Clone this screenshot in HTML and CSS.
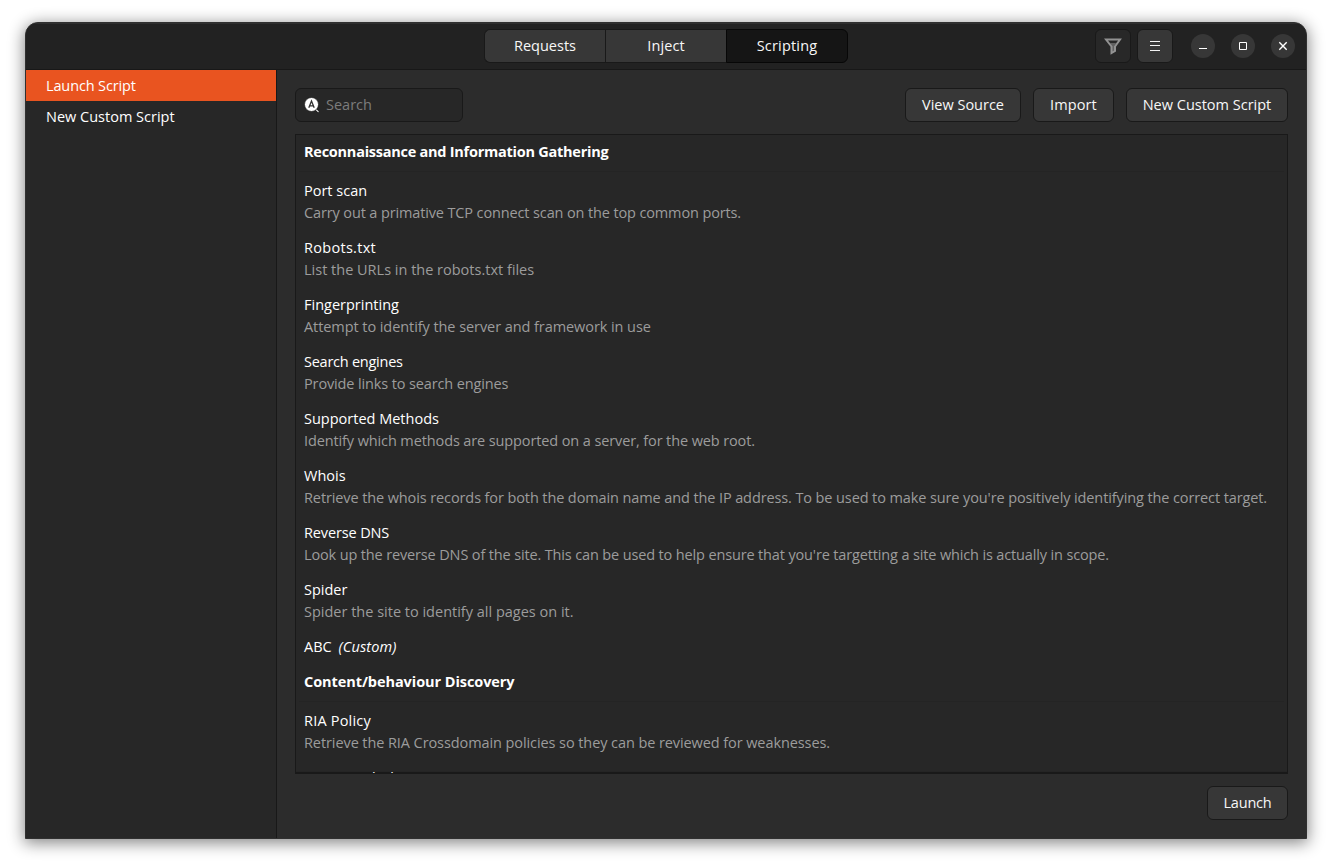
FILE: index.html
```html
<!DOCTYPE html>
<html lang="en">
<head>
<meta charset="utf-8">
<title>Scripting</title>
<link rel="stylesheet" href="styles.css">
</head>
<body>
<div class="window">
  <header class="headerbar">
    <div class="side"></div>
    <nav class="tabs">
      <button class="tab">Requests</button>
      <button class="tab wide-1">Inject</button>
      <button class="tab active wide-2">Scripting</button>
    </nav>
    <div class="side controls">
      <button class="icon-button dim" aria-label="Filter">
        <svg width="18" height="18" viewBox="0 0 18 18"><path d="M6 6h6l-1.500 3v4.500L7.500 15.500V9z" fill="#616161"/><path d="M2 2.500H16L11 9.500V14L7.500 16V9.500Z" fill="none" stroke="#929292" stroke-width="2"/></svg>
      </button>
      <button class="icon-button" aria-label="Menu">
        <svg width="16" height="16" viewBox="0 0 16 16"><path d="M3 3.500H13M3 7.500H13M3 12.500H13" stroke="#f2f2f2" stroke-width="1"/></svg>
      </button>
      <div class="window-buttons">
        <button class="round" aria-label="Minimize"><svg width="24" height="24"><path d="M8 14.500H16" stroke="#fff"/></svg></button>
        <button class="round" aria-label="Maximize"><svg width="24" height="24"><path d="M8.500 8.500H15.500V15.500H8.500Z" fill="none" stroke="#fff"/></svg></button>
        <button class="round" aria-label="Close"><svg width="24" height="24"><path d="M8.300 8.300L15.700 15.700M15.700 8.300L8.300 15.700" stroke="#fff" stroke-width="1.400"/></svg></button>
      </div>
    </div>
  </header>
  <div class="body">
    <aside class="sidebar">
      <div class="side-item selected tight-2">Launch Script</div>
      <div class="side-item">New Custom Script</div>
    </aside>
    <main class="content">
      <div class="toolbar">
        <div class="search">
          <svg width="16" height="16" viewBox="0 0 16 16"><path d="M11 11.500L14.500 15" stroke="#151515" stroke-width="3"/><path d="M11.500 12L14.500 15" stroke="#ddd" stroke-width="1.200"/><circle cx="7.500" cy="7.500" r="7" fill="#fff" stroke="#151515" stroke-width=".7"/><path d="M4.800 10.800L7.500 4L10.200 10.800M5.800 8.800H9.200" fill="none" stroke="#333" stroke-width="1.300"/></svg>
          <span>Search</span>
        </div>
        <div class="actions">
          <button class="button view">View Source</button>
          <button class="button import wide-1">Import</button>
          <button class="button new">New Custom Script</button>
        </div>
      </div>
      <section class="list">
        <h2 class="tight-3">Reconnaissance and Information Gathering</h2>
        <div class="row"><p>Port scan</p><p class="desc tight-2">Carry out a primative TCP connect scan on the top common ports.</p></div>
        <div class="row"><p class="wide-3">Robots.txt</p><p class="desc">List the URLs in the robots.txt files</p></div>
        <div class="row"><p>Fingerprinting</p><p class="desc tight-1">Attempt to identify the server and framework in use</p></div>
        <div class="row"><p class="tight-3">Search engines</p><p class="desc tight-2">Provide links to search engines</p></div>
        <div class="row"><p>Supported Methods</p><p class="desc methods">Identify which methods are supported on a server, for the web root.</p></div>
        <div class="row"><p>Whois</p><p class="desc whois">Retrieve the whois records for both the domain name and the IP address. To be used to make sure you're positively identifying the correct target.</p></div>
        <div class="row"><p class="tight-2">Reverse DNS</p><p class="desc reverse">Look up the reverse DNS of the site. This can be used to help ensure that you're targetting a site which is actually in scope.</p></div>
        <div class="row"><p>Spider</p><p class="desc">Spider the site to identify all pages on it.</p></div>
        <div class="row"><p>ABC <em>(Custom)</em></p></div>
        <h2 class="tight-1">Content/behaviour Discovery</h2>
        <div class="row"><p class="wide-2">RIA Policy</p><p class="desc policy">Retrieve the RIA Crossdomain policies so they can be reviewed for weaknesses.</p></div>
        <div class="row"><p class="wide-2">Directory hid</p></div>
      </section>
      <footer class="footer"><button class="button launch">Launch</button></footer>
    </main>
  </div>
</div>
</body>
</html>
```
FILE: styles.css
```css
* { box-sizing: border-box; }
body {
  margin: 0;
  height: 867px;
  padding: 22px 25px 28px;
  overflow: hidden;
  background: #fff;
  color: #fff;
  font: 14.5px/22px "Open Sans", "Noto Sans", sans-serif;
}
p, h2 { margin: 0; }
svg { display: block; }
button {
  margin: 0;
  padding: 0;
  font: inherit;
  letter-spacing: inherit;
  color: #f7f7f7;
  background: #373737;
  border: 1px solid #191919;
}
.window {
  height: 817px;
  display: flex;
  flex-direction: column;
  overflow: hidden;
  border: 1px solid #303030;
  border-radius: 13px 13px 0 0;
  background: #2c2c2c;
  box-shadow: 0 3px 16px 1px rgba(0,0,0,.48);
}
.headerbar {
  flex: 0 0 47px;
  display: flex;
  align-items: center;
  background: #222;
  border-top: 1px solid #303030;
  border-bottom: 1px solid #181818;
}
.side { flex: 1 1 0; min-width: 0; }
.tabs { display: flex; margin-top: -1px; }
.tab { width: 121px; height: 34px; border-right: 0; }
.tab:first-child { border-radius: 6px 0 0 6px; }
.tab.active {
  width: 122px;
  background: #151515;
  border: 1px solid #070707;
  border-radius: 0 6px 6px 0;
}
.controls { display: flex; justify-content: flex-end; align-items: center; margin-top: -1px; }
.icon-button {
  width: 36px;
  height: 34px;
  margin-right: 6px;
  border-radius: 6px;
  display: grid;
  place-items: center;
}
.icon-button.dim { background: #282828; }
.window-buttons { display: flex; gap: 16px; margin: 0 11px 0 12px; }
.round { width: 24px; height: 24px; border: 0; border-radius: 50%; }
.body { flex: 1; min-height: 0; display: flex; }
.sidebar { width: 251px; background: #272727; border-right: 1px solid #181818; }
.side-item { height: 31px; padding: 5px 20px 4px; }
.side-item.selected { background: #e95420; }
.content { flex: 1; min-width: 0; padding: 18px; display: flex; flex-direction: column; gap: 12px; }
.toolbar { display: flex; justify-content: space-between; height: 34px; }
.search {
  width: 168px;
  display: flex;
  align-items: center;
  gap: 6px;
  padding: 0 8px;
  color: #7c7c7c;
  background: #272727;
  border: 1px solid #191919;
  border-radius: 6px;
}
.actions { display: flex; gap: 12px; }
.button { height: 34px; border-radius: 6px; }
.view { width: 116px; }
.import { width: 81px; }
.new { width: 162px; }
.list {
  flex: 0 0 640px;
  overflow: hidden;
  background: #272727;
  border: 1px solid #191919;
  box-shadow: inset 0 -2px 1px -1px #191919;
}
.list h2 {
  margin: 0 3px;
  padding: 8px 5px;
  font-size: 14.5px;
  line-height: 22px;
  font-weight: 700;
  border-bottom: 1px solid #242424;
}
.list h2:first-child { padding-top: 6px; }
.row { padding: 8px 8px 5px; white-space: nowrap; }
.desc { color: #9c9c9c; }
.row em { margin-left: 3px; letter-spacing: .15px; }
.footer { display: flex; justify-content: flex-end; }
.launch { width: 81px; letter-spacing: -.2px; }
.tight-1 { letter-spacing: -.07px; }
.tight-2 { letter-spacing: -.13px; }
.tight-3 { letter-spacing: -.25px; }
.wide-1 { letter-spacing: .1px; }
.wide-2 { letter-spacing: .2px; }
.wide-3 { letter-spacing: .29px; }
.methods { letter-spacing: -.115px; }
.whois { letter-spacing: -.108px; }
.reverse { letter-spacing: -.143px; }
.policy { letter-spacing: -.086px; }
```
